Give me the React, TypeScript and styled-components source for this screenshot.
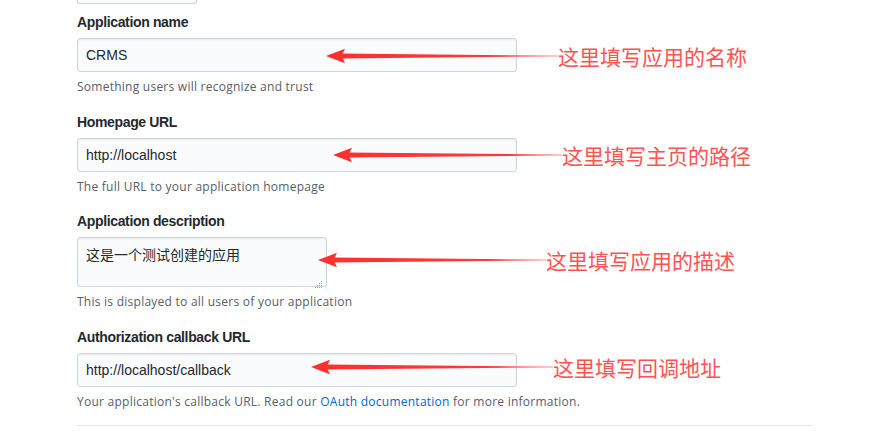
import React from 'react'
import styled, { createGlobalStyle } from 'styled-components'

const GlobalStyle = createGlobalStyle`
  body {
    margin: 0;
    background: #fff;
    font-family: "Segoe UI", "Liberation Sans", "Noto Sans CJK SC", sans-serif;
    color: #24292e;
  }
`

const Page = styled.div`
  width: 736px;
  padding-left: 77px;
`

const TopStub = styled.div`
  width: 118px;
  height: 3px;
  border: 1px solid #d1d5da;
  border-top: none;
  border-radius: 0 0 3px 3px;
  background: #fafbfc;
`

const Field = styled.div<{ $gap: number }>`
  margin-top: ${p => p.$gap}px;
`

const Label = styled.label`
  display: block;
  font-size: 14px;
  font-weight: 700;
  line-height: 20px;
  letter-spacing: -0.35px;
  margin-bottom: 6px;
`

const InputRow = styled.div`
  position: relative;
  width: 440px;
`

const TextInput = styled.input`
  box-sizing: border-box;
  display: block;
  width: 440px;
  height: 34px;
  padding: 6px 8px;
  font: inherit;
  font-size: 14px;
  line-height: 20px;
  color: #24292e;
  background: #fafbfc;
  border: 1px solid #d1d5da;
  border-radius: 3px;
  box-shadow: inset 0 1px 2px rgba(27, 31, 35, 0.075);
  outline: none;
`

const TextArea = styled.textarea`
  box-sizing: border-box;
  display: block;
  width: 250px;
  height: 50px;
  padding: 7px 8px;
  font: inherit;
  font-size: 14px;
  line-height: 20px;
  color: #24292e;
  background: #fafbfc;
  border: 1px solid #d1d5da;
  border-radius: 3px;
  box-shadow: inset 0 1px 2px rgba(27, 31, 35, 0.075);
  resize: none;
  outline: none;
`

const Grip = styled.span`
  position: absolute;
  left: 237px;
  bottom: 3px;
  width: 9px;
  height: 9px;
`

const Note = styled.p`
  margin: 6px 0 0;
  font-family: "Open Sans", "Liberation Sans", sans-serif;
  font-size: 12px;
  line-height: 18px;
  letter-spacing: 0.25px;
  color: #586069;
`

const Link = styled.a`
  color: #0366d6;
  text-decoration: none;
`

const Divider = styled.hr`
  width: 736px;
  margin: 14px 0 0;
  border: none;
  border-top: 1px solid #e1e4e8;
`

const Annotation = styled.div<{ $left: number; $dy: number }>`
  position: absolute;
  top: 50%;
  left: ${p => p.$left}px;
  transform: translateY(-50%);
  margin-top: ${p => p.$dy}px;
  display: flex;
  align-items: center;
  pointer-events: none;
`

const Callout = styled.span`
  font-family: "Noto Sans CJK SC", sans-serif;
  font-size: 21px;
  line-height: 24px;
  color: #ff5252;
  white-space: nowrap;
`

const Arrow = ({ length, id }: { length: number; id: string }) => (
  <svg width={length} height={16} viewBox={`0 0 ${length} 16`}>
    <defs>
      <linearGradient id={id} x1="0" x2="1" y1="0" y2="0">
        <stop offset="0" stopColor="#ff2f2f" />
        <stop offset="0.75" stopColor="#ff3a3a" />
        <stop offset="1" stopColor="#ff9a9a" />
      </linearGradient>
    </defs>
    <polygon points={`14,5.6 ${length},7.6 ${length},8.4 14,10.4`} fill={`url(#${id})`} />
    <polygon points="0,8 19,0.8 15.5,8 19,15.2" fill="#ff2f2f" />
  </svg>
)

const Pointer = ({ left, length, dy, text, id }: { left: number; length: number; dy: number; text: string; id: string }) => (
  <Annotation $left={left} $dy={dy}>
    <Arrow length={length} id={id} />
    <Callout>{text}</Callout>
  </Annotation>
)

export default function App() {
  return (
    <>
      <GlobalStyle />
      <Page>
        <TopStub />
        <Field $gap={8}>
          <Label>Application name</Label>
          <InputRow>
            <TextInput defaultValue="CRMS" />
            <Pointer id="a1" left={249} length={232} dy={1} text="这里填写应用的名称" />
          </InputRow>
          <Note>Something users will recognize and trust</Note>
        </Field>
        <Field $gap={16}>
          <Label>Homepage URL</Label>
          <InputRow>
            <TextInput defaultValue="http://localhost" />
            <Pointer id="a2" left={256} length={229} dy={0} text="这里填写主页的路径" />
          </InputRow>
          <Note>The full URL to your application homepage</Note>
        </Field>
        <Field $gap={15}>
          <Label>Application description</Label>
          <InputRow>
            <TextArea defaultValue="这是一个测试创建的应用" />
            <Grip>
              <svg width="9" height="9" viewBox="0 0 9 9">
                <g fill="#a0a4a8">
                  <rect x="7" y="1" width="1" height="1" />
                  <rect x="5" y="3" width="1" height="1" />
                  <rect x="7" y="3" width="1" height="1" />
                  <rect x="3" y="5" width="1" height="1" />
                  <rect x="5" y="5" width="1" height="1" />
                  <rect x="7" y="5" width="1" height="1" />
                  <rect x="1" y="7" width="1" height="1" />
                  <rect x="3" y="7" width="1" height="1" />
                  <rect x="5" y="7" width="1" height="1" />
                  <rect x="7" y="7" width="1" height="1" />
                </g>
              </svg>
            </Grip>
            <Pointer id="a3" left={241} length={228} dy={-2} text="这里填写应用的描述" />
          </InputRow>
          <Note>This is displayed to all users of your application</Note>
        </Field>
        <Field $gap={16}>
          <Label>Authorization callback URL</Label>
          <InputRow>
            <TextInput defaultValue="http://localhost/callback" />
            <Pointer id="a4" left={234} length={242} dy={-3} text="这里填写回调地址" />
          </InputRow>
          <Note>
            Your application's callback URL. Read our <Link href="#">OAuth documentation</Link> for more information.
          </Note>
        </Field>
        <Divider />
      </Page>
    </>
  )
}
